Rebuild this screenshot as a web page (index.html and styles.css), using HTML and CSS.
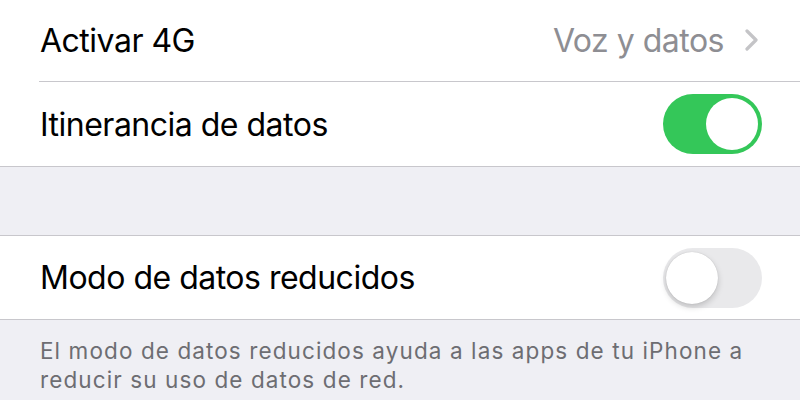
FILE: index.html
```html
<!DOCTYPE html>
<html>
<head>
<meta charset="utf-8">
<link rel="stylesheet" href="styles.css">
</head>
<body>
<div class="group group-first">
  <div class="row">
    <div class="cell inset">
      <span class="label">Activar 4G</span>
      <span class="detail">Voz y datos
        <svg class="chev" width="14" height="22" viewBox="0 0 14 22"><path d="M2 2 L11 11 L2 20" fill="none" stroke="#c4c4c7" stroke-width="3.2" stroke-linecap="round" stroke-linejoin="round"/></svg>
      </span>
    </div>
  </div>
  <div class="row">
    <div class="cell tall">
      <span class="label">Itinerancia de datos</span>
      <span class="switch on"><span class="knob"></span></span>
    </div>
  </div>
</div>
<div class="spacer"></div>
<div class="group">
  <div class="row">
    <div class="cell">
      <span class="label">Modo de datos reducidos</span>
      <span class="switch off"><span class="knob"></span></span>
    </div>
  </div>
</div>
<p class="footer">El modo de datos reducidos ayuda a las apps de tu iPhone a reducir su uso de datos de red.</p>
</body>
</html>
```
FILE: styles.css
```css
html, body {
  margin: 0;
  padding: 0;
}
body {
  background: #efeff4;
  font-family: Inter, "Liberation Sans", sans-serif;
  width: 800px;
  height: 400px;
  overflow: hidden;
}
.group {
  background: #fff;
  border-top: 1px solid #c8c7cc;
  border-bottom: 1px solid #c8c7cc;
}
.group-first {
  border-top: none;
  margin-top: -1px;
}
.row {
  padding-left: 39px;
}
.cell {
  height: 83px;
  display: flex;
  align-items: center;
  justify-content: space-between;
  padding-right: 38px;
  box-sizing: border-box;
}
.cell.tall {
  height: 84px;
}
.cell.inset {
  border-bottom: 1px solid #c8c7cc;
}
.label {
  font-size: 32px;
  color: #000;
  letter-spacing: -0.5px;
  padding-left: 1px;
}
.detail {
  font-size: 32px;
  color: #8e8e93;
  letter-spacing: -0.5px;
  display: flex;
  align-items: center;
  gap: 21px;
  margin-right: 3px;
}
.chev {
  display: block;
}
.spacer {
  height: 68px;
}
.switch {
  width: 99px;
  height: 60px;
  border-radius: 30px;
  position: relative;
  box-sizing: border-box;
}
.switch.on {
  background: #34c759;
}
.switch.off {
  background: #e9e9eb;
}
.knob {
  position: absolute;
  top: 4px;
  width: 52px;
  height: 52px;
  border-radius: 50%;
  background: #fff;
}
.switch.on .knob {
  right: 4px;
}
.switch.off .knob {
  left: 3px;
  box-shadow: 0 3px 6px rgba(0,0,0,0.18), 0 0 1px rgba(0,0,0,0.2);
}
.footer {
  margin: 0;
  padding: 16px 30px 0 40px;
  font-size: 22.5px;
  line-height: 29px;
  color: #6d6d72;
  letter-spacing: 1.1px;
}
```
